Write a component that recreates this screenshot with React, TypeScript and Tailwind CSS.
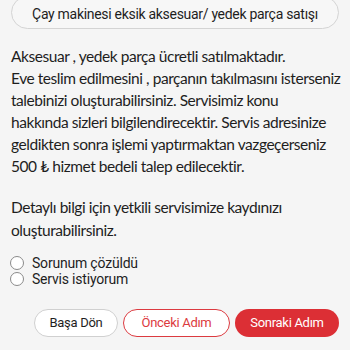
import React from "react";

export default function App() {
  return (
    <div className="w-[350px] h-[350px] overflow-hidden bg-[#f5f5f5] px-[11px] flex flex-col">
      <div className="mt-[-4px] h-[33px] shrink-0 rounded-full border border-[#d4d4d4] bg-[#f7f7f7] flex items-center justify-center pt-[3px] text-[14px] tracking-[-0.3px] text-[#1e1e1e] font-['Roboto',sans-serif] whitespace-nowrap">
        Çay makinesi eksik aksesuar/ yedek parça satışı
      </div>
      <div className="mt-[16px] text-[15.5px] tracking-[-0.45px] leading-[22px] text-[#1e1e1e] font-['Lato',sans-serif] whitespace-nowrap">
        <p>Aksesuar , yedek parça ücretli satılmaktadır.</p>
        <p>
          Eve teslim edilmesini , parçanın takılmasını isterseniz
          <br />
          talebinizi oluşturabilirsiniz. Servisimiz konu
          <br />
          hakkında sizleri bilgilendirecektir. Servis adresinize
          <br />
          geldikten sonra işlemi yaptırmaktan vazgeçerseniz
          <br />
          500 ₺ hizmet bedeli talep edilecektir.
        </p>
        <p className="mt-[19px] leading-[23px]">
          Detaylı bilgi için yetkili servisimize kaydınızı
          <br />
          oluşturabilirsiniz.
        </p>
      </div>
      <div className="mt-[13px] flex flex-col font-['Roboto',sans-serif] text-[14px] tracking-[-0.2px] text-[#1e1e1e]">
        {["Sorunum çözüldü", "Servis istiyorum"].map((t) => (
          <label key={t} className="flex items-center h-[16px] gap-[8px]">
            <span className="ml-[-1px] w-[14px] h-[14px] rounded-full border border-[#8a8a8a] bg-white" />
            <span>{t}</span>
          </label>
        ))}
      </div>
      <div className="mt-[22px] flex justify-end gap-[5px] font-['Roboto',sans-serif] text-[13px] tracking-[-0.3px] whitespace-nowrap">
        <button className="h-[28px] w-[84px] rounded-full border border-[#d0d0d0] bg-white text-[#1e1e1e]">
          Başa Dön
        </button>
        <button className="h-[28px] w-[107px] rounded-full border border-[#dc3a40] bg-white text-[#dc3a40]">
          Önceki Adım
        </button>
        <button className="h-[28px] w-[104px] rounded-full bg-[#dc2f35] text-white">
          Sonraki Adım
        </button>
      </div>
    </div>
  );
}
